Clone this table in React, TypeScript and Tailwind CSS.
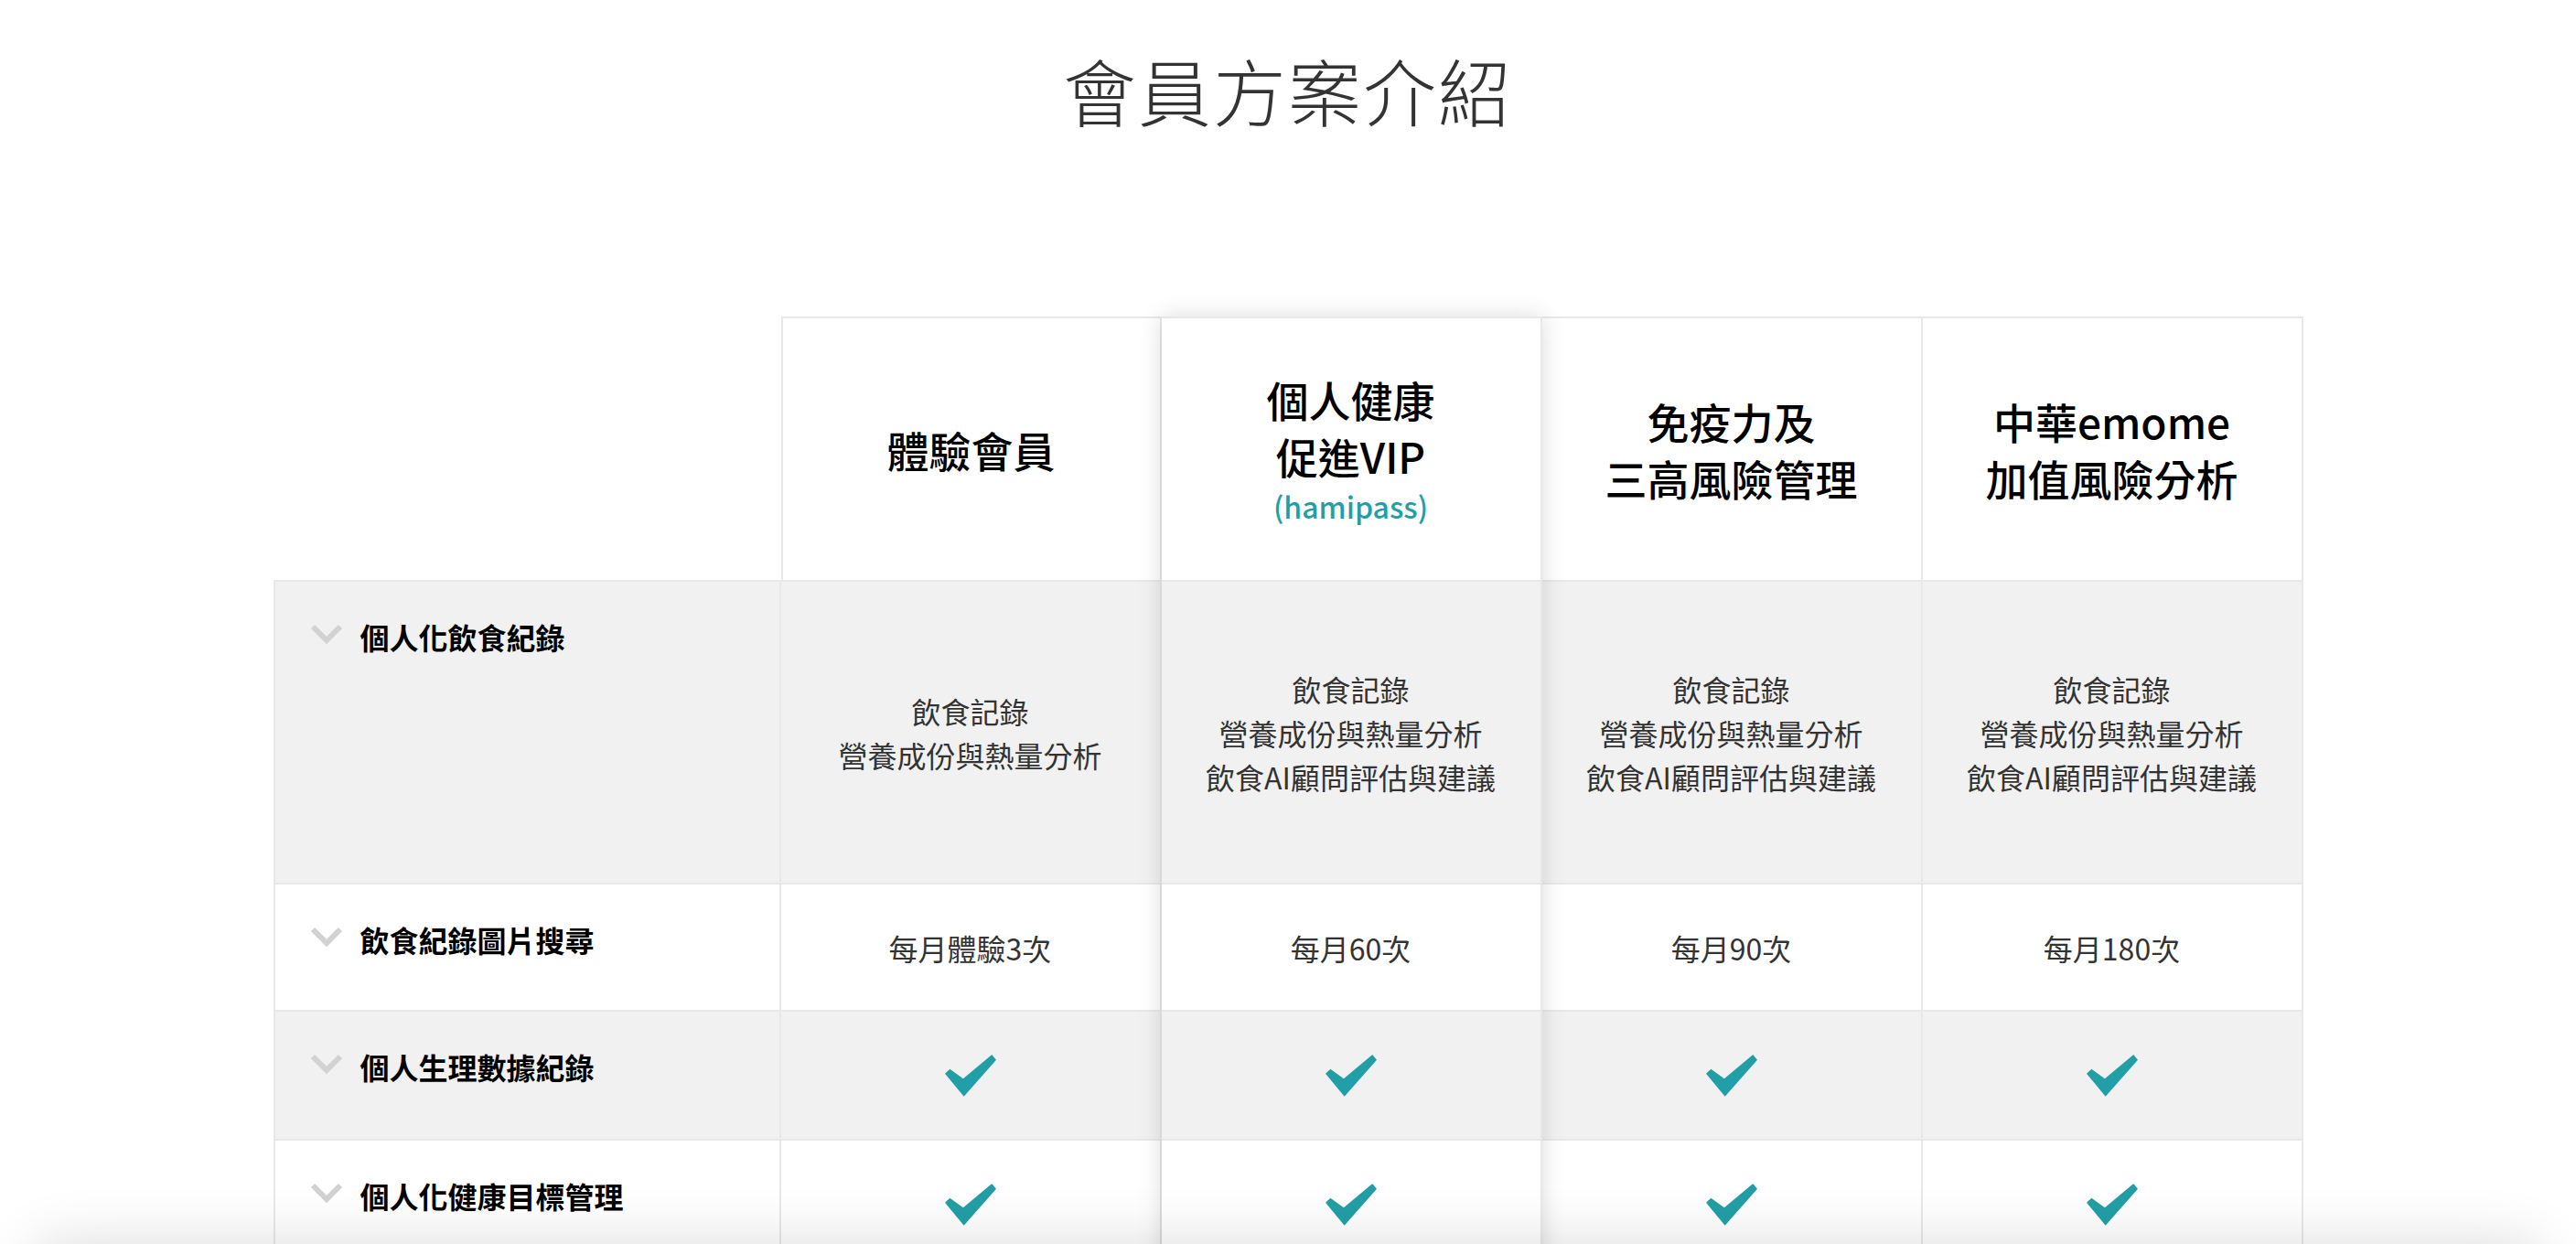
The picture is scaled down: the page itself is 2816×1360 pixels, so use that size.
const TEAL = "#229fa6";

type Cell = string[] | "check";

const COL = ["col-start-1", "col-start-2", "col-start-3", "col-start-4", "col-start-5"];
const ROW = ["row-start-1", "row-start-2", "row-start-3", "row-start-4", "row-start-5"];

const plans = [
  { lines: ["體驗會員"] },
  { lines: ["個人健康", "促進VIP"], sub: "(hamipass)" },
  { lines: ["免疫力及", "三高風險管理"] },
  { lines: ["中華emome", "加值風險分析"] },
];

const rows: { label: string; height: string; shaded: boolean; cells: Cell[] }[] = [
  {
    label: "個人化飲食紀錄",
    height: "h-[331px]",
    shaded: true,
    cells: [
      ["飲食記錄", "營養成份與熱量分析"],
      ["飲食記錄", "營養成份與熱量分析", "飲食AI顧問評估與建議"],
      ["飲食記錄", "營養成份與熱量分析", "飲食AI顧問評估與建議"],
      ["飲食記錄", "營養成份與熱量分析", "飲食AI顧問評估與建議"],
    ],
  },
  {
    label: "飲食紀錄圖片搜尋",
    height: "h-[139px]",
    shaded: false,
    cells: [["每月體驗3次"], ["每月60次"], ["每月90次"], ["每月180次"]],
  },
  {
    label: "個人生理數據紀錄",
    height: "h-[141px]",
    shaded: true,
    cells: ["check", "check", "check", "check"],
  },
  {
    label: "個人化健康目標管理",
    height: "h-[141px]",
    shaded: false,
    cells: ["check", "check", "check", "check"],
  },
];

const Chevron = () => (
  <svg width="36" height="22" viewBox="0 0 36 22" className="shrink-0 mt-[10px]">
    <polyline points="3,3 18,18 33,3" fill="none" stroke="#d2d2d2" strokeWidth="6" />
  </svg>
);

const Check = () => (
  <svg width="56" height="46" viewBox="0 0 56 46">
    <polygon points="0,20.7 5.4,15.7 19.9,26.3 51.3,0 56,5.7 20.7,45.7" fill={TEAL} />
  </svg>
);

export default function App() {
  return (
    <div
      className="min-h-screen bg-white text-[#222]"
      style={{ fontFamily: '"Noto Sans CJK TC", "Noto Sans", sans-serif' }}
    >
      <h1 className="pt-[57px] text-center text-[80px] leading-none font-light tracking-[2px] text-[#333]">
        會員方案介紹
      </h1>

      <div className="mt-[209px] flex justify-center pb-[80px]">
        <div className="grid grid-cols-[555px_repeat(4,416px)]">
          {/* header row */}
          <div className="col-start-1 row-start-1 h-[290px] border-b-2 border-[#e8e8e8]" />
          {plans.map((p, i) => (
            <div
              key={i}
              className={`${COL[i + 1]} row-start-1 h-[290px] flex flex-col items-center justify-center border-t-2 border-b-2 border-r-2 border-[#e8e8e8] bg-white text-center ${
                i === 0 ? "border-l-2" : ""
              } ${i === 1 ? "relative z-10" : ""}`}
            >
              {p.lines.map((l) => (
                <div key={l} className="text-[46px] leading-[62px] font-medium text-black">
                  {l}
                </div>
              ))}
              {p.sub && (
                <div className="text-[32px] leading-[48px] font-medium" style={{ color: TEAL }}>
                  {p.sub}
                </div>
              )}
            </div>
          ))}

          {rows.map((r, ri) => (
            <div key={r.label} className="contents">
              <div
                className={`col-start-1 ${ROW[ri + 1]} ${r.height} flex items-start gap-[19px] pl-[38px] pt-[36px] border-l-2 border-r-2 border-b-2 border-[#e8e8e8] ${
                  r.shaded ? "bg-[#f1f1f1]" : "bg-white"
                }`}
              >
                <Chevron />
                <span className="text-[32px] leading-[48px] font-bold text-black">{r.label}</span>
              </div>
              {r.cells.map((c, i) => (
                <div
                  key={r.label + i}
                  className={`${COL[i + 1]} ${ROW[ri + 1]} ${r.height} flex flex-col items-center justify-center border-r-2 border-b-2 border-[#e8e8e8] text-center ${
                    r.shaded ? "bg-[#f1f1f1]" : "bg-white"
                  } ${i === 1 ? "relative z-10" : ""}`}
                >
                  {c === "check" ? (
                    <Check />
                  ) : (
                    c.map((l) => (
                      <div key={l} className="text-[32px] leading-[48px] text-[#333]">
                        {l}
                      </div>
                    ))
                  )}
                </div>
              ))}
            </div>
          ))}

          {/* shadow around the highlighted VIP column */}
          <div className="col-start-3 row-start-1 row-end-6 relative z-0 pointer-events-none shadow-[0_0_24px_rgba(0,0,0,0.14)]" />
        </div>
      </div>

      {/* soft shadow of the bar below the fold */}
      <div className="fixed left-[30px] right-[30px] bottom-[-70px] h-[70px] rounded-[120px] bg-white shadow-[0_-6px_60px_rgba(0,0,0,0.12)] z-20" />
    </div>
  );
}
